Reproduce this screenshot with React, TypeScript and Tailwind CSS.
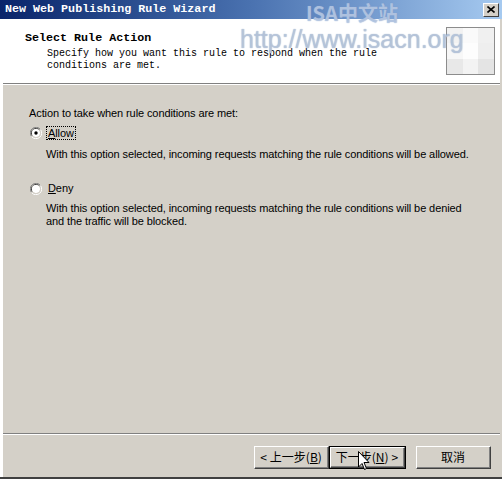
import React from "react";

const mono = { fontFamily: '"Liberation Mono", "DejaVu Sans Mono", monospace' };

function Radio({ checked }: { checked?: boolean }) {
  return (
    <svg width="12" height="12" viewBox="0 0 12 12" className="shrink-0">
      <path d="M10.5 2.5 A5 5 0 0 0 1.5 9.5" fill="none" stroke="#808080" strokeWidth="1" />
      <path d="M9.6 3.2 A4 4 0 0 0 2.4 8.8" fill="none" stroke="#404040" strokeWidth="1" />
      <circle cx="6" cy="6" r="4" fill="#ffffff" />
      <path d="M1.5 9.5 A5 5 0 0 0 10.5 2.5" fill="none" stroke="#ffffff" strokeWidth="1" />
      <path d="M2.4 8.8 A4 4 0 0 0 9.6 3.2" fill="none" stroke="#d4d0c8" strokeWidth="1" />
      {checked && <circle cx="6" cy="6" r="1.7" fill="#000" />}
    </svg>
  );
}

function Btn({ children, def }: { children: React.ReactNode; def?: boolean }) {
  return (
    <div className={def ? "border border-black" : ""}>
      <div
        className={
          "flex items-center justify-center bg-[#d4d0c8] border-t border-l border-t-white border-l-white border-r border-b border-r-[#404040] border-b-[#404040] " +
          (def ? "w-[75px] h-[21px]" : "w-[75px] h-[23px]")
        }
      >
        <div className="w-full h-full flex items-center justify-center gap-[3px] border-r border-b border-r-[#808080] border-b-[#808080] text-[12px] text-black whitespace-nowrap" style={{ fontFamily: '"Noto Sans CJK SC", "Liberation Sans", sans-serif' }}>
          {children}
        </div>
      </div>
    </div>
  );
}

export default function App() {
  return (
    <div className="relative w-[502px] h-[479px] bg-[#d4d0c8] flex flex-col overflow-hidden">
      {/* title bar */}
      <div className="h-[19px] shrink-0 flex items-center justify-between bg-gradient-to-r from-[#0a246a] via-[#4a72b0] to-[#a6caf0] pl-[5px] pr-[3px]">
        <span className="text-white font-bold text-[11.7px] leading-none" style={mono}>
          New Web Publishing Rule Wizard
        </span>
        <div className="w-[16px] h-[14px] bg-[#d4d0c8] border-t border-l border-t-white border-l-white border-r border-b border-r-[#404040] border-b-[#404040] flex items-center justify-center">
          <svg width="8" height="7" viewBox="0 0 8 7">
            <path d="M0.5 0.5 L7.5 6.5 M7.5 0.5 L0.5 6.5" stroke="#000" strokeWidth="1.6" />
          </svg>
        </div>
      </div>

      <div className="flex-1 flex flex-col border-l-[3px] border-l-white border-r-[2px] border-r-[#d4d0c8]">
        {/* header */}
        <div className="h-[64px] shrink-0 bg-white flex justify-between pl-[22px] pr-[5px]">
          <div className="pt-[13px]">
            <div className="font-bold text-[11.7px] leading-[12px] text-black" style={mono}>
              Select Rule Action
            </div>
            <div className="pl-[22px] pt-[4px] text-[10px] leading-[12px] text-black" style={mono}>
              <div>Specify how you want this rule to respond when the rule</div>
              <div>conditions are met.</div>
            </div>
          </div>
          <div className="mt-[8px] w-[49px] h-[48px] border border-[#8c8c8c] bg-gradient-to-br from-[#f4f4f4] via-[#fbfbfb] to-[#e2e2e2] grid grid-cols-3 grid-rows-3">
            <div className="bg-[#f2f2f2]" />
            <div className="bg-[#fafafa]" />
            <div className="bg-[#f0f0f0]" />
            <div className="bg-[#f7f7f7]" />
            <div className="bg-[#fdfdfd]" />
            <div className="bg-[#eeeeee]" />
            <div className="bg-[#e8e8e8]" />
            <div className="bg-[#f3f3f3]" />
            <div className="bg-[#e4e4e4]" />
          </div>
        </div>
        <div className="h-[2px] border-t border-t-[#808080] border-b border-b-white" />

        {/* body */}
        <div className="flex-1 pl-[26px] pt-[22px] text-black text-[11px] leading-[13px]" style={{ fontFamily: '"Liberation Sans", Arial, sans-serif', letterSpacing: "-0.1px" }}>
          <div>Action to take when rule conditions are met:</div>
          <div className="flex items-center mt-[5px] ml-[1px] h-[15px]">
            <Radio checked />
            <span className="ml-[4px] px-[1px] border border-dotted border-black leading-[12px]">
              <u>A</u>llow
            </span>
          </div>
          <div className="ml-[17px] mt-[8px]">
            With this option selected, incoming requests matching the rule conditions will be allowed.
          </div>
          <div className="flex items-center mt-[20px] ml-[1px] h-[15px]">
            <Radio />
            <span className="ml-[5px] px-[1px]">
              <u>D</u>eny
            </span>
          </div>
          <div className="ml-[17px] mt-[6px]">
            <div>With this option selected, incoming requests matching the rule conditions will be denied</div>
            <div>and the traffic will be blocked.</div>
          </div>
        </div>

        <div className="h-[2px] border-t border-t-[#808080] border-b border-b-white" />
        {/* buttons */}
        <div className="h-[42px] shrink-0 flex items-start justify-end pr-[9px] pt-[11px]">
          <Btn>
            <span>&lt;</span>
            <span>上一步(<u>B</u>)</span>
          </Btn>
          <Btn def>
            <span>下一步(<u>N</u>)</span>
            <span>&gt;</span>
          </Btn>
          <div className="w-[10px]" />
          <Btn>取消</Btn>
        </div>
      </div>
      <div className="h-[2px] shrink-0 bg-[#404040]" />

      {/* watermark */}
      <div className="absolute left-[306px] top-[2px] text-[20px] leading-[22px] font-bold text-[#d0dcef]/60 pointer-events-none" style={{ fontFamily: '"Noto Sans CJK SC", sans-serif', textShadow: "0 0 1px #7f9cc8" }}>
        ISA中文站
      </div>
      <div className="absolute left-[240px] top-[26px] text-[25px] leading-[26px] text-[#c4d0e2]/70 pointer-events-none" style={{ fontFamily: '"Liberation Sans", sans-serif', textShadow: "0 0 1px #8aa0c0" }}>
        http://www.isacn.org
      </div>

      {/* cursor */}
      <svg className="absolute left-[358px] top-[451px]" width="13" height="21" viewBox="0 0 13 21">
        <path d="M0.5 0.5 L0.5 16 L4 12.5 L6.5 18.5 L8.5 17.5 L6 11.5 L11 11.5 Z" fill="#fff" stroke="#000" strokeWidth="1" strokeLinejoin="miter" />
      </svg>
    </div>
  );
}
